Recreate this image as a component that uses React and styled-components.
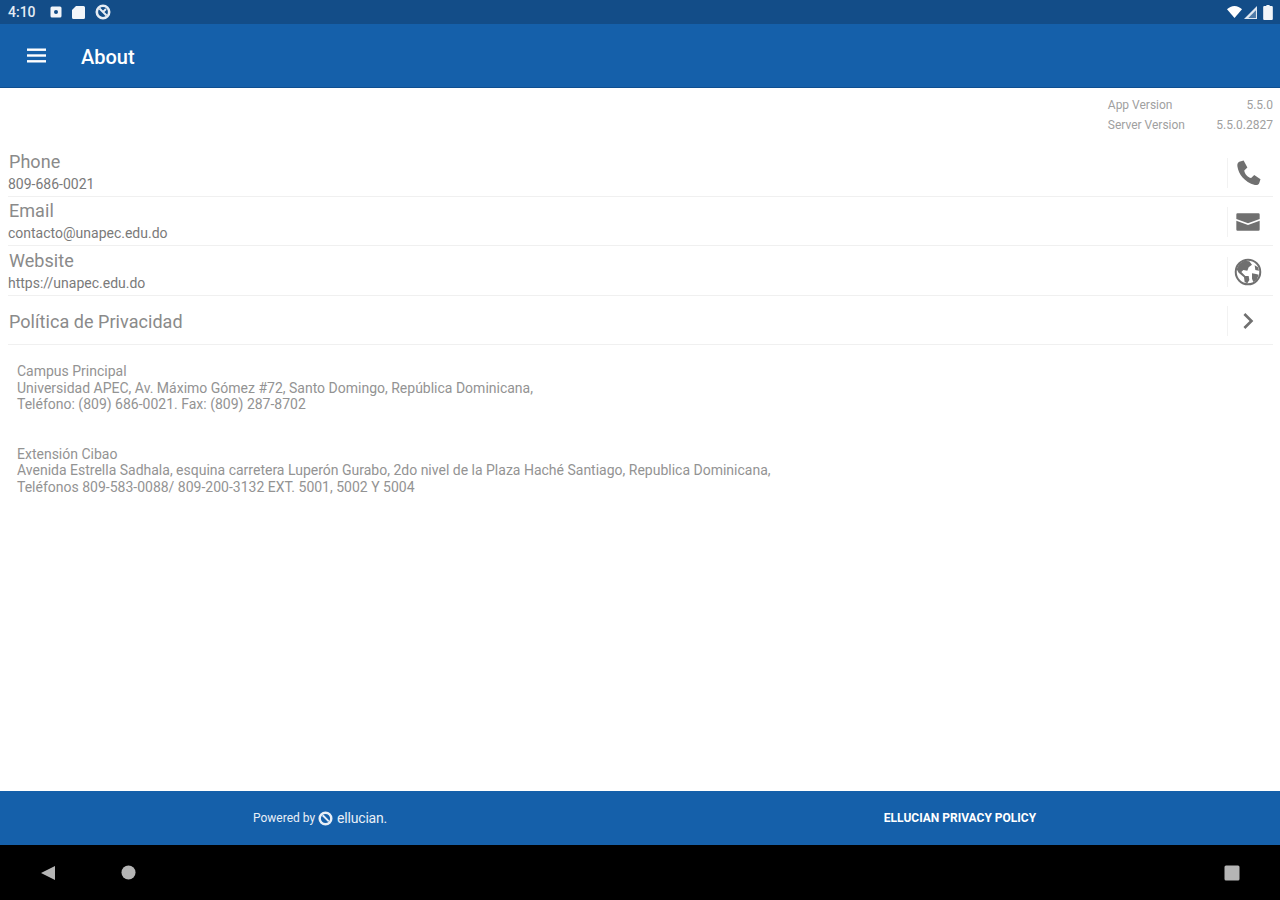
import React from 'react';
import styled, { createGlobalStyle } from 'styled-components';

const Global = createGlobalStyle`
  html, body { margin: 0; padding: 0; background: #fff; }
  body { font-family: Roboto, "Liberation Sans", sans-serif; }
`;

const Screen = styled.div`
  width: 1280px;
  height: 900px;
  display: flex;
  flex-direction: column;
  overflow: hidden;
`;

const StatusBar = styled.div`
  height: 24px;
  background: #134d88;
  display: flex;
  align-items: center;
  justify-content: space-between;
  padding: 0 7px 0 8px;
  color: #e4ecf4;
`;

const StatusGroup = styled.div`
  display: flex;
  align-items: center;
  gap: ${p => p.$gap}px;
`;

const Clock = styled.span`
  font-size: 14px;
  font-weight: 500;
  margin-right: 4px;
`;

const BatterySlot = styled.span`
  display: flex;
  margin-left: 4px;
`;

const AppBar = styled.header`
  height: 63px;
  background: #1560aa;
  border-bottom: 1px solid #0f4f90;
  box-sizing: content-box;
  display: flex;
  align-items: center;
  color: #fff;
`;

const MenuButton = styled.div`
  width: 81px;
  padding-left: 27px;
  box-sizing: border-box;
  display: flex;
`;

const Title = styled.h1`
  margin: 2px 0 0;
  font-size: 20px;
  font-weight: 500;
  line-height: 24px;
`;

const Content = styled.main`
  flex: 1;
  padding: 7px 7px 0 8px;
  color: #777;
`;

const VersionTable = styled.div`
  display: grid;
  grid-template-columns: auto 88px;
  justify-content: end;
  font-size: 12px;
  line-height: 20px;
  color: #a0a0a0;
  margin-bottom: 13px;
`;

const VersionValue = styled.span`
  text-align: right;
`;

const Row = styled.div`
  height: ${p => p.$height}px;
  border-bottom: 1px solid #f0f0f0;
  display: flex;
  align-items: center;
  justify-content: space-between;
  box-sizing: border-box;
`;

const RowText = styled.div`
  display: flex;
  flex-direction: column;
  padding-top: ${p => (p.$single ? 3 : 0)}px;
`;

const RowLabel = styled.span`
  font-size: 18px;
  line-height: 24px;
  color: #8a8a8a;
  padding-left: 1px;
  letter-spacing: 0.05px;
`;

const RowValue = styled.span`
  font-size: 14px;
  line-height: 20px;
  color: #7a7a7a;
`;

const RowAction = styled.div`
  width: 46px;
  height: 30px;
  margin-top: 2px;
  padding-right: 6px;
  box-sizing: border-box;
  border-left: 1px solid #f2f2f2;
  display: flex;
  align-items: center;
  justify-content: center;
  color: #707070;
`;

const Address = styled.p`
  margin: ${p => p.$top}px 0 0 9px;
  font-size: 14px;
  line-height: 16.6px;
  color: #939393;
`;

const Footer = styled.footer`
  height: 54px;
  background: #1560aa;
  display: grid;
  grid-template-columns: 640px 640px;
  align-items: center;
  color: #e8eff7;
`;

const Powered = styled.div`
  display: flex;
  align-items: center;
  justify-content: center;
  font-size: 12px;
  gap: 3px;
`;

const Brand = styled.span`
  font-size: 14px;
  letter-spacing: -0.2px;
  margin-left: 1px;
`;

const PrivacyLink = styled.div`
  text-align: center;
  font-size: 12px;
  font-weight: 700;
  color: #fff;
`;

const NavBar = styled.nav`
  height: 55px;
  background: #000;
  display: flex;
  align-items: center;
  gap: 65px;
  padding: 0 40px;
  color: #b5b5b5;
`;

const NavEnd = styled.div`
  margin-left: auto;
  display: flex;
`;

const Phone = () => (
  <svg width="30" height="30" viewBox="0 0 24 24" fill="currentColor">
    <path d="M5 3l3.5-1 3 5.500-2.500 2.500c.3 2.800 2.700 5.500 5.500 6l2.500-2.500 5 3.500-1 3c-.5 1.500-2 2-3.500 1.500C9 19 4.500 13 3.500 6.500 3.300 5 3.800 3.500 5 3z" />
  </svg>
);

const Mail = () => (
  <svg width="28" height="28" viewBox="0 0 24 24" fill="currentColor">
    <path d="M3 4.500h18a1 1 0 0 1 1 1v13a1 1 0 0 1-1 1H3a1 1 0 0 1-1-1v-13a1 1 0 0 1 1-1zm-1 5v1.500l10 3.500 10-3.500V9.500l-10 3.500z" fillRule="evenodd" />
  </svg>
);

const Globe = () => (
  <svg width="32" height="32" viewBox="0 0 24 24" fill="currentColor">
    <circle cx="12" cy="12" r="9.2" fill="none" stroke="currentColor" strokeWidth="1.5" />
    <path d="M9 3.500l4 .5 2 2.500-2.500 2-1 2.500-3-.5-1.500 1.500 3 3h2.500l.5 3-1.500 2.500-2-1-.5-3.500L5 12.500 3.500 10 5.500 6zM15 13l3 .5 2 .5-1.500 4-2.500 1.500-1-2.500zM17 7l2.500 1.500.8 2.500-2.800-.5z" />
  </svg>
);

const Chevron = () => (
  <svg width="32" height="32" viewBox="0 0 24 24" fill="currentColor">
    <path d="M10 6 8.590 7.410 13.170 12l-4.580 4.590L10 18l6-6z" />
  </svg>
);

const Menu = () => (
  <svg width="19" height="16" viewBox="0 0 19 16" fill="#fff">
    <rect y="0.5" width="19" height="2.4" />
    <rect y="6.3" width="19" height="2.4" />
    <rect y="12.1" width="19" height="2.4" />
  </svg>
);

const EllucianMark = () => (
  <svg width="15" height="15" viewBox="0 0 16 16" fill="none" stroke="currentColor">
    <circle cx="8" cy="8" r="6.2" strokeWidth="2.6" />
    <path d="M5 4.500 11.500 11" strokeWidth="2" />
  </svg>
);

const StatusIcons = {
  Photo: () => (
    <svg width="12" height="12" viewBox="0 0 12 12">
      <rect x="0.5" y="0.5" width="11" height="11" rx="1.5" fill="#f2f5f9" />
      <circle cx="6" cy="6" r="2" fill="#134d88" />
    </svg>
  ),
  Card: () => (
    <svg width="13" height="14" viewBox="0 0 13 14" fill="#f2f5f9">
      <path d="M4 1h7.500A1.500 1.500 0 0 1 13 2.500v10a1.500 1.500 0 0 1-1.500 1.500h-10A1.500 1.500 0 0 1 0 12.500V5z" />
    </svg>
  ),
  Block: () => (
    <svg width="16" height="16" viewBox="0 0 16 16" fill="none" stroke="#e6ecf3">
      <circle cx="8" cy="8" r="6.2" strokeWidth="2.6" />
      <path d="M4.500 4.500 11.500 11.500M11 5l-3 3" strokeWidth="2" />
    </svg>
  ),
  Wifi: () => (
    <svg width="15" height="12" viewBox="0 0 15 12" fill="#fff">
      <path d="M7.500 12 0 3.200C2 1.300 4.600 0 7.500 0S13 1.300 15 3.200z" />
    </svg>
  ),
  Signal: () => (
    <svg width="13" height="13" viewBox="0 0 12 12">
      <path d="M0 12 12 0v12z" fill="#dfe7f0" />
      <path d="M4 11 11 4v7z" fill="#134d88" opacity="0.7" />
    </svg>
  ),
  Battery: () => (
    <svg width="10" height="15" viewBox="0 0 9 14" fill="#f2f5f9">
      <path d="M3 0h3v1h2a1 1 0 0 1 1 1v11a1 1 0 0 1-1 1H1a1 1 0 0 1-1-1V2a1 1 0 0 1 1-1h2z" />
    </svg>
  )
};

const contacts = [
  { label: 'Phone', value: '809-686-0021', icon: <Phone />, height: 49 },
  { label: 'Email', value: 'contacto@unapec.edu.do', icon: <Mail />, height: 49 },
  { label: 'Website', value: 'https://unapec.edu.do', icon: <Globe />, height: 50 }
];

export default function App() {
  return (
    <Screen>
      <Global />
      <StatusBar>
        <StatusGroup $gap={10}>
          <Clock>4:10</Clock>
          <StatusIcons.Photo />
          <StatusIcons.Card />
          <StatusIcons.Block />
        </StatusGroup>
        <StatusGroup $gap={2}>
          <StatusIcons.Wifi />
          <StatusIcons.Signal />
          <BatterySlot>
            <StatusIcons.Battery />
          </BatterySlot>
        </StatusGroup>
      </StatusBar>
      <AppBar>
        <MenuButton>
          <Menu />
        </MenuButton>
        <Title>About</Title>
      </AppBar>
      <Content>
        <VersionTable>
          <span>App Version</span>
          <VersionValue>5.5.0</VersionValue>
          <span>Server Version</span>
          <VersionValue>5.5.0.2827</VersionValue>
        </VersionTable>
        {contacts.map(c => (
          <Row key={c.label} $height={c.height}>
            <RowText>
              <RowLabel>{c.label}</RowLabel>
              <RowValue>{c.value}</RowValue>
            </RowText>
            <RowAction>{c.icon}</RowAction>
          </Row>
        ))}
        <Row $height={49}>
          <RowText $single>
            <RowLabel>Política de Privacidad</RowLabel>
          </RowText>
          <RowAction>
            <Chevron />
          </RowAction>
        </Row>
        <Address $top={18}>
          Campus Principal
          <br />
          Universidad APEC, Av. Máximo Gómez #72, Santo Domingo, República Dominicana,
          <br />
          Teléfono: (809) 686-0021. Fax: (809) 287-8702
        </Address>
        <Address $top={33}>
          Extensión Cibao
          <br />
          Avenida Estrella Sadhala, esquina carretera Luperón Gurabo, 2do nivel de la Plaza Haché Santiago, Republica Dominicana,
          <br />
          Teléfonos 809-583-0088/ 809-200-3132 EXT. 5001, 5002 Y 5004
        </Address>
      </Content>
      <Footer>
        <Powered>
          Powered by
          <EllucianMark />
          <Brand>ellucian.</Brand>
        </Powered>
        <PrivacyLink>ELLUCIAN PRIVACY POLICY</PrivacyLink>
      </Footer>
      <NavBar>
        <svg width="16" height="16" viewBox="0 0 16 16" fill="currentColor">
          <path d="M15 1v14L1 8z" />
        </svg>
        <svg width="15" height="15" viewBox="0 0 16 16" fill="currentColor">
          <circle cx="8" cy="8" r="7.5" />
        </svg>
        <NavEnd>
          <svg width="16" height="16" viewBox="0 0 16 16" fill="currentColor">
            <rect x="0.5" y="0.5" width="15" height="15" rx="1.5" />
          </svg>
        </NavEnd>
      </NavBar>
    </Screen>
  );
}
